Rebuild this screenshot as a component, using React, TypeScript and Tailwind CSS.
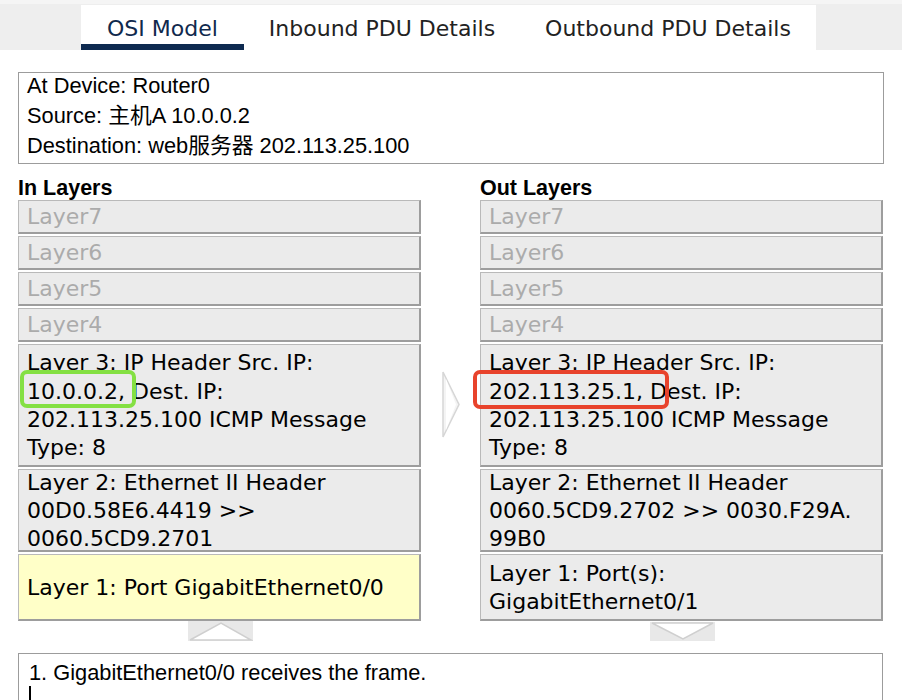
import React from "react";

const LAYER_FONT = "font-['DejaVu_Sans',sans-serif]";

function LayerBox({
  h,
  dim,
  yellow,
  lines,
}: {
  h: string;
  dim?: boolean;
  yellow?: boolean;
  lines: string[];
}) {
  return (
    <div
      className={`${h} flex flex-col justify-center pl-2 pt-[2px] border border-t-[#b9b9b9] border-l-[#b9b9b9] border-r-2 border-b-2 border-r-[#9d9d9d] border-b-[#9d9d9d] ${
        yellow ? "bg-[#ffffc8]" : "bg-[#ebebeb]"
      } ${dim ? "text-[#ababab]" : "text-black"} ${LAYER_FONT} text-[22px] leading-[28.3px] whitespace-nowrap`}
    >
      {lines.map((l, i) => (
        <div key={i}>{l}</div>
      ))}
    </div>
  );
}

function Column({
  title,
  l3,
  l2,
  l1,
  l1Yellow,
}: {
  title: string;
  l3: string[];
  l2: string[];
  l1: string[];
  l1Yellow?: boolean;
}) {
  return (
    <div className="w-[403px] flex flex-col">
      <div className="font-['Liberation_Sans',sans-serif] font-bold text-[21.5px] leading-[22px] h-[22px] mt-[2px]">
        {title}
      </div>
      <div className="flex flex-col gap-[2px] mt-[1px]">
        <LayerBox h="h-[34px]" dim lines={["Layer7"]} />
        <LayerBox h="h-[34px]" dim lines={["Layer6"]} />
        <LayerBox h="h-[34px]" dim lines={["Layer5"]} />
        <LayerBox h="h-[34px]" dim lines={["Layer4"]} />
        <LayerBox h="h-[123px]" lines={l3} />
        <LayerBox h="h-[83px]" lines={l2} />
        <LayerBox h="h-[67px]" yellow={l1Yellow} lines={l1} />
      </div>
    </div>
  );
}

export default function App() {
  return (
    <div className="relative w-[902px] h-[700px] overflow-hidden bg-white">
      {/* Tab bar */}
      <div className="h-[50px] bg-[#eeeeee] border-t-[4px] border-[#f5f5f5] flex">
        <div className="ml-[81px] mt-[1px] bg-white flex h-[45px] font-['DejaVu_Sans',sans-serif] text-[22px]">
          <div className="relative px-[26px] flex items-center text-[#10294d] pt-[2px]">
            OSI Model
            <div className="absolute left-0 right-0 bottom-0 h-[6px] bg-[#0e2a50]" />
          </div>
          <div className="px-[25px] flex items-center text-[#222] pt-[2px]">
            Inbound PDU Details
          </div>
          <div className="px-[25px] flex items-center text-[#222] pt-[2px]">
            Outbound PDU Details
          </div>
        </div>
      </div>

      {/* Info box */}
      <div className="mx-[18px] mt-[22px] h-[92px] border border-[#9c9c9c] pl-[8px] font-['Liberation_Sans','Noto_Sans_CJK_SC',sans-serif] text-[21.8px] text-black">
        <div className="leading-[26px]">At Device: Router0</div>
        <div className="leading-[33px]">Source: 主机A 10.0.0.2</div>
        <div className="leading-[28px]">Destination: web服务器 202.113.25.100</div>
      </div>

      {/* Layers */}
      <div className="flex ml-[18px] mt-[11px]">
        <Column
          title="In Layers"
          l3={[
            "Layer 3: IP Header Src. IP:",
            "10.0.0.2, Dest. IP:",
            "202.113.25.100 ICMP Message",
            "Type: 8",
          ]}
          l2={["Layer 2: Ethernet II Header", "00D0.58E6.4419 >>", "0060.5CD9.2701"]}
          l1={["Layer 1: Port GigabitEthernet0/0"]}
          l1Yellow
        />
        <div className="w-[59px] flex justify-center pt-[196px] pl-[2px]">
          <svg width="19" height="67" viewBox="0 0 19 67">
            <polygon points="1,1 17,33.5 1,66" fill="#f4f4f4" stroke="#d6d6d6" strokeWidth="1.5" />
            <polygon points="4,8 14,33.5 4,59" fill="#ffffff" />
          </svg>
        </div>
        <Column
          title="Out Layers"
          l3={[
            "Layer 3: IP Header Src. IP:",
            "202.113.25.1, Dest. IP:",
            "202.113.25.100 ICMP Message",
            "Type: 8",
          ]}
          l2={["Layer 2: Ethernet II Header", "0060.5CD9.2702 >> 0030.F29A.", "99B0"]}
          l1={["Layer 1: Port(s):", "GigabitEthernet0/1"]}
        />
      </div>

      {/* scroll arrows */}
      <div className="flex ml-[188px]">
        <svg width="65" height="20" viewBox="0 0 65 20">
          <rect x="0" y="0" width="65" height="20" fill="#e8e8e8" />
          <polygon points="2,19 33,2 63,19" fill="#ffffff" stroke="#cfcfcf" strokeWidth="1.5" />
        </svg>
        <svg width="65" height="20" viewBox="0 0 65 20" className="ml-[397px] mt-[1px]">
          <rect x="0" y="0" width="65" height="19" fill="#e8e8e8" />
          <polygon points="2,1 33,17 63,1" fill="#ffffff" stroke="#cfcfcf" strokeWidth="1.5" />
        </svg>
      </div>

      {/* Bottom text box */}
      <div className="ml-[18px] mt-[11px] w-[865px] h-[80px] border border-[#9c9c9c] pl-[10px] pt-[6px] font-['Liberation_Sans',sans-serif] text-[21.8px] text-black">
        <div className="leading-[26px]">1. GigabitEthernet0/0 receives the frame.</div>
        <div className="w-[2px] h-[16px] bg-black" />
      </div>

      {/* Annotation outlines */}
      <div className="absolute left-[20px] top-[370px] w-[116px] h-[38px] border-[4px] border-[#84e043] rounded-[7px]" />
      <div className="absolute left-[473px] top-[370px] w-[196px] h-[39px] border-[4px] border-[#e8432c] rounded-[7px]" />
    </div>
  );
}
